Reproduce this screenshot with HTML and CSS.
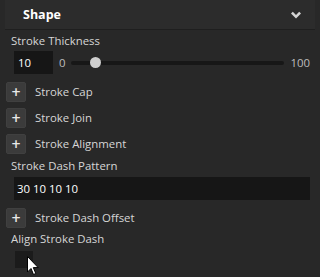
FILE: index.html
```html
<!DOCTYPE html>
<html lang="en">
<head>
    <meta charset="UTF-8">
    <title>Shape</title>
    <link rel="stylesheet" href="styles.css">
</head>
<body>
    <div class="panel">
        <div class="header">
            <span class="title">Shape</span>
            <svg class="chevron" width="12" height="9" viewBox="0 0 12 9"><path d="M1 2.5 L2.8 0.8 L6 4 L9.2 0.8 L11 2.5 L6 7.5 Z" fill="#d4d4d4"/></svg>
        </div>

        <div class="label first">Stroke Thickness</div>
        <div class="slider-row">
            <div class="num-input">10</div>
            <span class="min">0</span>
            <div class="track"><div class="thumb"></div></div>
            <span class="max">100</span>
        </div>

        <div class="expander after-input"><button class="plus">+</button><span>Stroke Cap</span></div>
        <div class="expander"><button class="plus">+</button><span>Stroke Join</span></div>
        <div class="expander"><button class="plus">+</button><span>Stroke Alignment</span></div>

        <div class="label after-expander">Stroke Dash Pattern</div>
        <div class="text-input">30 10 10 10</div>

        <div class="expander after-input"><button class="plus">+</button><span>Stroke Dash Offset</span></div>

        <div class="label first">Align Stroke Dash</div>
        <div class="checkbox"></div>
    </div>

    <svg class="cursor" width="13" height="20" viewBox="0 0 13 20"><path d="M0.5 0.5 L0.5 16 L4 12.5 L6.5 18.5 L8.8 17.5 L6.3 11.6 L11.2 11.6 Z" fill="#ffffff" stroke="#000000" stroke-width="1"/></svg>
</body>
</html>
```

FILE: styles.css
```css
body {
  margin: 0;
  background: #282828;
  font-family: "Open Sans", sans-serif;
  font-size: 11.4px;
  color: #d6d6d6;
  width: 320px;
  height: 277px;
  overflow: hidden;
  position: relative;
}

.panel {
  display: flex;
  flex-direction: column;
}

.header {
  margin: 0 5px;
  height: 30px;
  box-sizing: border-box;
  background: #2c2c2c;
  border-bottom: 1px solid #1f1f1f;
  display: flex;
  align-items: center;
  justify-content: space-between;
  padding: 0 13px 0 18px;
}

.title {
  color: #ffffff;
  font-weight: bold;
  font-size: 12.5px;
}

.chevron {
  margin-top: 1px;
}

.label {
  padding-left: 11px;
  height: 20px;
  line-height: 20px;
}

.label.first {
  margin-top: 1px;
}

.label.after-expander {
  margin-top: 2px;
}

.slider-row {
  display: flex;
  align-items: center;
  height: 23px;
}

.num-input {
  margin-left: 14px;
  width: 39px;
  height: 23px;
  line-height: 23px;
  background: #161616;
  color: #ffffff;
  padding-left: 4px;
  box-sizing: border-box;
}

.min {
  margin-left: 6px;
  color: #bdbdbd;
}

.track {
  margin-left: 5px;
  width: 213px;
  height: 4px;
  border-radius: 2px;
  background: #171717;
  position: relative;
}

.thumb {
  position: absolute;
  left: 19px;
  top: -4px;
  width: 11px;
  height: 11px;
  border-radius: 50%;
  background: #cfcfcf;
}

.max {
  margin-left: 7px;
  color: #bdbdbd;
}

.expander {
  display: flex;
  align-items: center;
  height: 20px;
  margin-top: 6px;
}

.expander.after-input {
  margin-top: 8px;
}

.plus {
  margin-left: 6px;
  width: 20px;
  height: 20px;
  padding: 0;
  border: 1px solid #404040;
  border-radius: 2px;
  background: #3b3b3b;
  color: #e8e8e8;
  font-family: "DejaVu Sans", sans-serif;
  font-size: 12px;
  font-weight: bold;
  line-height: 16px;
}

.expander span {
  margin-left: 9px;
  margin-bottom: 2px;
}

.text-input {
  margin: 1px 10px 0 14px;
  height: 23px;
  line-height: 23px;
  background: #161616;
  color: #ffffff;
  padding-left: 3px;
}

.checkbox {
  margin: 2px 0 0 15px;
  width: 18px;
  height: 17px;
  background: #1b1b1b;
}

.cursor {
  position: absolute;
  left: 27px;
  top: 256px;
}
```
